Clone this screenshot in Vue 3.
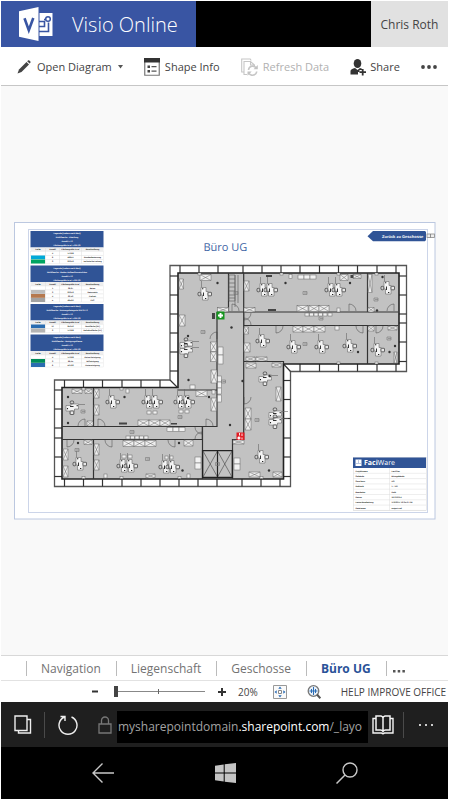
<script setup>
import { ref } from 'vue'

const zoom = ref(20)

const tabs = ['Navigation', 'Liegenschaft', 'Geschosse', 'Büro UG']
const activeTab = ref('Büro UG')

const headings = ['Farbe', 'Anzahl', 'Flächengröße in m²', 'Beschreibung']
const legends = [
  {
    y: 231, title: 'Multiflaeche - Abteilung',
    rows: [
      ['', '4', '170,88', ''],
      ['#00a9d8', '8', '588,51', 'Kundenbetreuung'],
      ['#00a562', '3', '202,53', 'Technische Leitung'],
    ],
  },
  {
    y: 265.5, title: 'Multiflaeche - Boden-Aufbau/Konstruktion',
    rows: [
      ['', '1', '38,67', 'Beton'],
      ['#bdbdbd', '3', '202,53', 'Naturstein'],
      ['#b5794f', '4', '92,53', 'Parkett'],
      ['#a2a2a2', '5', '485,60', 'PVC'],
    ],
  },
  {
    y: 304, title: 'Multiflaeche - Nutzungskategorie DIN 277-2',
    rows: [
      ['#2a6cb0', '10', '650,52', 'Nutzfläche (NF)'],
      ['#b4b4b4', '3', '170,88', 'Verkehrsfläche (VF)'],
    ],
  },
  {
    y: 334.5, title: 'Multiflaeche - Reinigungsklasse',
    rows: [
      ['', '4', '170,88', 'Keine Reinigung'],
      ['#008c58', '3', '88,45', 'Vollreinigung'],
      ['#2a6cb0', '6', '501,62', 'Unterreinigung'],
    ],
  },
]
const cols = [38, 52.5, 70.5, 92.5]

const info = [
  ['Projektname', 'FaciPlan'],
  ['Gebäude', 'Bürogebäude'],
  ['Geschoss', 'UG'],
  ['Maßstab', '1 : 100'],
  ['Bearbeiter', 'Roth'],
  ['Datum', '18.03.2014'],
  ['Letzte Bearbeitung', '1/12/2017 12:35:07 PM'],
  ['Dateiname', 'output.vsd'],
]

/* Grid ticks between the outer frame and the facade: [fixed edges, positions] */
const ticksX = [
  [265.5, 273, [180, 199, 218, 243, 262, 281, 300, 319.5, 338.5, 357.5, 377, 396]],
  [364, 371.5, [300, 319.5, 338.5, 357.5, 377, 396]],
  [380, 387.5, [64.5, 83.5, 102.5, 122, 141, 160]],
  [479, 486.5, [64.5, 83.5, 102.5, 122, 141, 160, 179, 198, 217, 242, 261, 280]],
]
const ticksY = [
  [399, 406.5, [276, 295, 314, 323, 342, 361.5]],
  [170, 178, [276, 295, 314, 333, 352, 371]],
  [54.5, 62, [390, 409, 428, 438, 457, 476.5]],
  [283.5, 290.5, [380.5, 399.5, 418.5, 438, 457, 476.5]],
]

const walls =
  'M228.5 273V312M217 312H398M243.7 325.5H398M217 312V427M243.7 273V437M367.5 273V312M367.5 325.5V364' +
  'M243.7 361.5H283.5V364M178 390H217M62 426.5H217M62 439.5H202.5V426.5M202.5 439.5V479' +
  'M93.5 388V426.5M93.5 439.5V479M232.5 479V439.5H243.7V432'

/* x, y, width, height of cupboards drawn with a cross */
const cabinets = [
  [200, 274.5, 11, 6], [179, 315, 6, 11], [179, 279, 4.5, 10], [217.5, 307.5, 11, 4.5],
  [210.5, 342, 6, 9.5], [210.5, 352, 6, 9.5], [211, 370, 6, 13], [211, 398, 5.5, 13],
  [244, 281, 5, 10], [244, 307.5, 11, 4.5], [297, 305.5, 11, 6], [309, 305.5, 10, 6], [319, 305.5, 10, 6],
  [244, 343, 6, 9], [244, 327, 4.5, 7], [293, 326, 10, 6], [303, 326, 11, 6], [314, 326, 11, 6],
  [246, 357, 9, 4], [256, 357, 11, 4], [246, 363, 10, 5], [272, 363, 9, 4],
  [340, 274.5, 8, 6], [353, 274.5, 8, 4], [368, 274.5, 4, 18], [368, 307.5, 6, 4.5],
  [368, 326, 6, 5], [388, 326, 9, 4], [394, 352, 3, 11],
  [72, 389, 10, 4.5], [85, 389, 7, 4.5], [94, 389, 5, 9], [94, 405, 5, 10], [87, 421, 6, 5],
  [138, 420, 11, 6], [149, 420, 11, 6], [160, 420, 10, 6], [196, 390.5, 11, 6],
  [123, 440.5, 11, 6], [134, 440.5, 11, 6], [145, 440.5, 11, 6], [84, 440, 8, 4.5],
  [94, 444, 5, 11], [94, 460, 5, 10], [63, 449, 5, 11], [63, 466, 5, 11], [184, 440, 9, 6],
  [245, 408, 6, 11], [245, 419, 6, 11], [233, 440, 11, 4], [276, 387, 5, 14],
  [249, 472, 11, 5], [273, 472, 9, 5], [146, 474, 9, 4],
]

/* Plain white boxes: chairs, stools and sideboards */
const boxes = [
  [298, 275, 6, 4], [304, 275, 6, 4], [310, 275, 6, 4], [289, 274.5, 3, 4],
  [305, 313, 4, 3], [309.5, 313, 4, 3], [314, 313, 4, 3], [318.5, 313, 4, 3], [323, 313, 4, 3], [328, 313, 4, 3],
  [218, 347, 5, 8], [218, 355, 5, 9], [217.5, 376, 4, 6], [217.5, 382, 4, 6], [217.5, 388, 4, 6], [217.5, 395, 4, 7],
  [167, 427.5, 6, 4], [173, 427.5, 6, 4], [179, 427.5, 6, 4],
  [126, 436, 4, 3], [130.5, 436, 4, 3], [135, 436, 4, 3], [139.5, 436, 4, 3], [144, 436, 4, 3],
  [195, 457, 6, 6], [195, 463, 6, 6], [234, 458, 6, 6], [234, 464, 6, 6],
  [126, 389, 3, 4], [337, 308, 3, 4], [335, 326, 4, 4], [190, 385, 5, 4], [212, 390, 3, 4],
  [104, 474, 3, 4], [187, 474, 3, 4],
  [70, 411, 4, 3], [147, 411, 4, 3], [153, 411, 4, 3], [179, 410, 4, 3], [185, 410, 4, 3],
  [122, 455, 4, 3], [128, 455, 4, 3], [165, 456, 3, 3], [170, 456, 3, 3],
  [198, 273, 3, 2], [280, 273, 3, 2], [337, 273, 3, 2], [375, 273, 3, 2], [337, 362, 3, 2], [375, 362, 3, 2],
  [82, 388, 3, 2], [120, 388, 3, 2], [82, 476.5, 3, 2], [120, 476.5, 3, 2], [178, 476.5, 3, 2], [260, 476.5, 3, 2],
]

/* Upright workplaces (x, y of the centre); the second list is laid on its side */
const desks = [
  [204, 294], [263, 290], [270, 290], [331, 290], [338, 290], [387, 288], [262, 341], [293, 347],
  [321, 347], [349, 346], [377, 350], [112, 402], [148, 402], [155, 402], [180, 402], [187, 402],
  [79, 464], [123, 466], [130, 466], [165, 467], [172, 467], [261, 457],
]
const sideDesks = [[186, 344], [186, 350], [72, 407], [265, 378], [275, 414], [275, 421]]

/* Door leaves: hinge x, hinge y, horizontal and vertical direction */
const doors = [
  [217, 339, -1, -1], [232, 311, 1, -1], [349, 311, 1, -1], [394, 311, -1, -1],
  [276, 326, 1, 1], [363, 326, -1, 1], [376, 326, 1, 1], [244, 313, 1, 1], [244, 325, 1, -1],
  [85, 426, -1, -1], [98, 426, 1, -1], [206, 426, 1, -1], [67, 440, 1, 1], [112, 440, -1, 1],
  [175, 440, -1, 1], [244, 397, 1, 1], [202, 427, -1, 1], [202, 439, -1, -1],
]
const doorPath = ([x, y, h, v]) =>
  `M${x} ${y}v${7 * v}a7 7 0 0 ${h * v > 0 ? 0 : 1} ${7 * h} ${-7 * v}`

const dots = [
  [217.5, 283], [285.5, 283], [188, 336], [350, 283], [382.5, 277], [358, 352], [389.5, 352], [395, 346],
  [231.5, 327.5], [242.5, 381], [230, 425], [68, 397], [124.5, 397], [68, 423], [78, 443], [179, 443],
  [188, 398], [209, 397], [182.5, 470.5], [269, 470.5], [188.5, 380], [269.5, 376], [377, 310.5],
]
const labels = [
  [203, 332], [305, 293], [305, 344], [376, 299.5], [389, 338.5], [83, 411.5], [77, 450], [147.5, 459],
  [132, 432], [180, 417], [257, 420], [217.5, 464], [236, 293], [223.5, 381.5], [321, 318.5],
]
</script>

<template>
  <div class="screen">
    <header class="brandbar">
      <a class="brand" href="#">
        <svg class="logo" viewBox="0 0 35 34" aria-hidden="true">
          <path d="M0 4.200 19.500 0v34L0 29.800z" fill="#fff" />
          <path d="M20.500 6h13v23h-13z" fill="#fff" />
          <path d="M20 14.500h5.500v5H20M20 24.500h9.500v-9M25 12.500h2" fill="none" stroke="#3955a3" stroke-width="1.600" />
          <circle cx="29" cy="12" r="2.300" fill="#fff" stroke="#3955a3" stroke-width="1.500" />
          <path d="m5.500 11.300 4.300 12L14.300 11" fill="none" stroke="#3955a3" stroke-width="2.600" />
        </svg>
        <span class="product">Visio Online</span>
      </a>
      <div class="blank"></div>
      <button class="user">Chris Roth</button>
    </header>

    <div class="toolbar">
      <button class="tool open">
        <svg width="14" height="14" viewBox="0 0 14 14" aria-hidden="true">
          <path d="M.5 13.500 2 9.500 9.500 2 12 4.500 4.500 12z" fill="#444" />
          <path d="M10.200 1.300 11.300.3c.8-.6 2.700 1.200 2.200 2.100l-.9 1.200z" fill="#444" />
        </svg>
        <span>Open Diagram</span>
        <svg width="5" height="4" viewBox="0 0 5 4" aria-hidden="true"><path d="M0 0h5L2.500 3.500z" fill="#555" /></svg>
      </button>
      <button class="tool">
        <svg width="16" height="18" viewBox="0 0 16 18" aria-hidden="true">
          <path d="M.75.75h14.500v16.500H.75z" fill="#fff" stroke="#777" stroke-width="1.200" />
          <path d="M0 0h16v4.500H0z" fill="#333" />
          <path d="M3.500 7.500H6V10H3.500zM3.500 12H6v2.500H3.500z" fill="#444" />
          <path d="M7.500 8.700h5M7.500 13.200h5" stroke="#555" stroke-width="1.200" />
        </svg>
        <span>Shape Info</span>
      </button>
      <button class="tool refresh" disabled>
        <svg width="17" height="18" viewBox="0 0 17 18" aria-hidden="true">
          <g fill="none" stroke="#c6c6c6" stroke-width="1.100">
            <path d="M2.500 14H.7V1h8.500l1 1.500M6 16.500H3V3.500h6.500l4 3.500v1M9.500 3.500V7h4" />
            <path d="M7.500 12a4.300 4.300 0 0 1 7.800-2M15.700 13.500a4.300 4.300 0 0 1-7.700 2" stroke-width="1.600" />
          </g>
          <path d="M16.800 7v4.300h-4.300zM6.500 17.800v-4.200h4.200z" fill="#c2c2c2" />
        </svg>
        <span>Refresh Data</span>
      </button>
      <button class="tool share">
        <svg width="17" height="17" viewBox="0 0 17 17" aria-hidden="true">
          <ellipse cx="7.500" cy="4.500" rx="3.800" ry="4.500" fill="#333" />
          <path d="M.5 15.500V12c0-1.500 2-2.500 4.500-3l2.500 2L10 9l2 .8v1.200H9.500v2H8v2.500z" fill="#333" />
          <path d="M12.700 10v6.500M9.500 13.200H16" stroke="#333" stroke-width="1.800" />
        </svg>
        <span>Share</span>
      </button>
      <button class="tool more" aria-label="More commands">
        <svg width="16" height="4" viewBox="0 0 16 4" aria-hidden="true">
          <circle cx="2" cy="2" r="1.900" /><circle cx="8" cy="2" r="1.900" /><circle cx="14" cy="2" r="1.900" />
        </svg>
      </button>
    </div>

    <main class="canvas">
      <svg class="drawing" viewBox="14 221 422 299" role="img" aria-label="Büro UG">
        <rect x="14.500" y="222.500" width="420.500" height="296.500" fill="#fff" stroke="#bcc8e0" />
        <rect x="28.500" y="229.500" width="399" height="283" fill="none" stroke="#ccd5e9" />
        <text class="title" x="203.500" y="251">Büro UG</text>

        <rect x="427" y="234" width="7.500" height="3.500" fill="#eee" stroke="#888" stroke-width=".8" />
        <path d="M430.500 234v3.500" stroke="#777" stroke-width=".8" />
        <path d="M367.500 236.200 373 231h52l1 1v8l-1 1.300h-52z" fill="#305496" />
        <text x="382" y="237.800" class="back">Zurück zu Geschosse</text>

        <g v-for="l in legends" :key="l.title" class="tiny">
          <rect x="30.500" :y="l.y" width="73" height="16.500" fill="#305496" />
          <g class="light">
            <text x="67" :y="l.y + 3.200">Legende (Farben nach Wert)</text>
            <text x="67" :y="l.y + 7.200">{{ l.title }}</text>
            <text x="67" :y="l.y + 11.200">Anzahl = 13</text>
            <text x="67" :y="l.y + 15.200">Flächengröße in m² = 887,93</text>
          </g>
          <rect x="30.500" :y="l.y + 16.500" width="73" height="4" fill="#eee" />
          <text v-for="(h, i) in headings" :key="h" :x="cols[i]" :y="l.y + 19.200">{{ h }}</text>
          <g v-for="(r, n) in l.rows" :key="n">
            <rect x="30.500" :y="l.y + 20.500 + n * 4" width="73" height="4" fill="#fff" stroke="#e2e2e2" stroke-width=".4" />
            <rect v-if="r[0]" x="31" :y="l.y + 20.500 + n * 4" width="14" height="4" :fill="r[0]" />
            <text v-for="i in 3" :key="i" :x="cols[i]" :y="l.y + 23.200 + n * 4">{{ r[i] }}</text>
          </g>
          <path :d="`M45.500 ${l.y + 16.5}v${4 + l.rows.length * 4}m14 0v-${4 + l.rows.length * 4}m22 0v${4 + l.rows.length * 4}`" stroke="#ddd" stroke-width=".5" fill="none" />
        </g>

        <path d="M170 265.500H406.500V371.500H290.500V486.500H54.500V380H170z" fill="#fff" stroke="#555" stroke-width="1.300" />
        <g stroke="#333" stroke-width="1.200">
          <template v-for="(t, i) in ticksX" :key="'x' + i">
            <path v-for="x in t[2]" :key="x" :d="`M${x} ${t[0]}V${t[1]}`" />
          </template>
          <template v-for="(t, i) in ticksY" :key="'y' + i">
            <path v-for="y in t[2]" :key="y" :d="`M${t[0]} ${y}H${t[1]}`" />
          </template>
          <path d="M170 380l8 8M283.500 364l7 7.500" />
        </g>
        <path d="M178 273H399V364H283.500V479H62V387.500H178z" fill="#c2c2c2" stroke="#222" stroke-width="1.600" />
        <path :d="walls" fill="none" stroke="#333" stroke-width="1.200" />

        <path d="M229 275v26h6V275zM229 279h6M229 283h6M229 287h6M229 291h6M229 295h6M229 298h6M235 275v32M238 275v28" fill="none" stroke="#666" stroke-width=".7" />
        <path d="M203 451h29v26h-29zM217.500 451v26M203 451l14.500 26M217.500 451l-14.500 26M217.500 451l14.500 26M232 451l-14.500 26" fill="none" stroke="#555" stroke-width=".7" />
        <path d="M202.500 450.500h30v27h-30zM217.500 450.500v27" fill="none" stroke="#222" stroke-width="1.200" />

        <g stroke="#666" stroke-width=".5">
          <g v-for="(c, i) in cabinets" :key="i">
            <rect :x="c[0]" :y="c[1]" :width="c[2]" :height="c[3]" fill="#eee" />
            <path :d="`M${c[0]} ${c[1]}l${c[2]} ${c[3]}m0 -${c[3]}l-${c[2]} ${c[3]}`" />
          </g>
          <rect v-for="(b, i) in boxes" :key="'b' + i" :x="b[0]" :y="b[1]" :width="b[2]" :height="b[3]" fill="#f2f2f2" />
          <path v-for="(d, i) in doors" :key="'d' + i" :d="doorPath(d)" fill="none" stroke="#444" />
        </g>

        <defs>
          <g id="desk">
            <path d="M-3-6.500h5v4h2V6H-1.500V1H-3z" fill="#f4f4f4" stroke="#555" stroke-width=".5" />
            <rect x="-6" y="-1.700" width="2.700" height="3.500" rx="1" fill="#ccc" stroke="#333" stroke-width=".7" />
            <rect x="4" y="-1.700" width="3.500" height="3.500" rx=".5" fill="#e8e8e8" stroke="#333" stroke-width=".7" />
            <path d="M-.5-1.500V2" stroke="#333" />
            <path d="M-2-5.200h1.300M1 4.500h1.300" stroke="#222" stroke-width="1.100" />
            <path d="M-2.500-13v6" stroke="#666" stroke-width=".6" />
          </g>
        </defs>
        <use v-for="(d, i) in desks" :key="'k' + i" href="#desk" :x="d[0]" :y="d[1]" />
        <g v-for="(d, i) in sideDesks" :key="'s' + i" :transform="`translate(${d[0]} ${d[1]}) rotate(90)`"><use href="#desk" /></g>

        <circle v-for="(d, i) in dots" :key="'o' + i" :cx="d[0]" :cy="d[1]" r="1.200" fill="#333" />
        <g fill="none" stroke="#777" stroke-width=".6">
          <path v-for="(l, i) in labels" :key="'l' + i" :d="`M${l[0] - 2} ${l[1] - 1.5}h4v3h-4zm1 1.500h3`" />
        </g>
        <path d="M266 275h6v2h-6zM268 309h8v2h-8zM119 422.500h8v2h-8zM350.500 275h3v3h-3zM171 423h6v1.500h-6zM212 313h3v6h-3z" fill="#444" />

        <rect x="216.500" y="311.500" width="8" height="8" fill="#179520" />
        <path d="M220.500 313v5M218 315.500h5" stroke="#fff" stroke-width="1.900" />
        <rect x="236.500" y="432.500" width="8" height="7.500" fill="#e31b23" />
        <path d="M239.500 433v2.500M238 437h1.800v2H238zM242 433.500v2.500M242 437.500v2" stroke="#fff" stroke-width=".9" fill="#fff" />

        <rect x="353.500" y="457.500" width="73" height="53" fill="#fff" stroke="#ddd" stroke-width=".6" />
        <rect x="353" y="457.500" width="73" height="10.500" fill="#305496" />
        <rect x="355.500" y="459.500" width="6" height="6.500" fill="#fff" />
        <path d="M358.500 459.500v4h3M355.500 463.500h3" fill="none" stroke="#9fb2d6" stroke-width=".7" />
        <text class="faci" x="364" y="465"><tspan class="strong">Faci</tspan>Ware</text>
        <g v-for="(r, i) in info" :key="r[0]" class="tiny start">
          <path :d="`M353 ${473.3 + i * 5.3}h73`" stroke="#ddd" stroke-width=".5" />
          <text x="355.500" :y="471.500 + i * 5.3">{{ r[0] }}</text>
          <text x="391.500" :y="471.500 + i * 5.3">{{ r[1] }}</text>
        </g>
        <path d="M389.500 468v42.500" stroke="#ddd" stroke-width=".5" />
      </svg>
    </main>

    <nav class="tabs" aria-label="Pages">
      <button v-for="t in tabs" :key="t" class="tab" :class="{ active: t === activeTab }" @click="activeTab = t">{{ t }}</button>
      <button class="tab overflow" aria-label="More pages">
        <svg width="12" height="4" viewBox="0 0 12 4" aria-hidden="true">
          <path d="M0 1h2.500v2.500H0zM4.700 1h2.500v2.500H4.700zM9.400 1h2.500v2.500H9.400z" fill="#555" />
        </svg>
      </button>
    </nav>

    <div class="status">
      <button class="step" aria-label="Zoom out"><svg width="8" height="8" viewBox="0 0 8 8"><path d="M1 3.500h6" stroke="#333" stroke-width="2" /></svg></button>
      <input class="slider" type="range" min="20" max="400" v-model.number="zoom" aria-label="Zoom" />
      <button class="step" aria-label="Zoom in"><svg width="8" height="8" viewBox="0 0 8 8"><path d="M0 4h8M4 0v8" stroke="#333" stroke-width="2" /></svg></button>
      <output class="percent">{{ zoom }}%</output>
      <button class="fit" aria-label="Fit page">
        <svg width="14" height="14" viewBox="0 0 14 14">
          <path d="M.5.5h13v13H.5z" fill="#fafafa" stroke="#999" />
          <path d="M5.500 5.500h3v3h-3z" fill="#fff" stroke="#888" />
          <path d="M7 1.500 8.700 3.700H5.300zM7 12.500l1.700-2.200H5.300zM1.500 7l2.200-1.700v3.400zM12.500 7l-2.200-1.700v3.400z" fill="#2b6cb5" />
        </svg>
      </button>
      <button class="fit" aria-label="Zoom to page width">
        <svg width="14" height="14" viewBox="0 0 14 14">
          <circle cx="6.500" cy="6" r="5.300" fill="#e8f0f8" stroke="#777" stroke-width="1.300" />
          <path d="m10 9.500 3.300 3.800" stroke="#555" stroke-width="2" />
          <path d="M6.500 2v8M2.500 6h8M4.500 4v4M8.500 4v4" stroke="#2b6cb5" />
        </svg>
      </button>
      <a class="help" href="#">HELP IMPROVE OFFICE</a>
    </div>

    <div class="browser">
      <button class="chrome pages" aria-label="Tabs">
        <svg width="18" height="19" viewBox="0 0 18 19"><path d="M1 1h12v14.500H1z M13 4.500h3.500V18H4.500v-2.500" fill="none" stroke="#eee" stroke-width="1.400" /></svg>
      </button>
      <button class="chrome reload" aria-label="Reload">
        <svg width="20" height="20" viewBox="0 0 20 20"><path d="M13.500 2a9 9 0 1 1-7 0M2.500 1.500h4.500V6" fill="none" stroke="#eee" stroke-width="1.400" /></svg>
      </button>
      <svg class="lock" width="14" height="18" viewBox="0 0 14 18" aria-hidden="true"><path d="M1 8h12v9H1zM3.500 8V4.500a3.500 3.500 0 0 1 7 0V8" fill="none" stroke="#777" stroke-width="1.300" /></svg>
      <button class="address">mysharepointdomain<b>.sharepoint.com</b>/_layo</button>
      <button class="chrome reader" aria-label="Reading view">
        <svg width="22" height="20" viewBox="0 0 22 20">
          <path d="M4 1h5q2 .5 2 2 0-1.500 2-2h5v14h-4.500q-2 0-2.500 1.500-.5-1.500-2.500-1.500H4zM11 3v13" fill="none" stroke="#f4f4f4" stroke-width="1.500" />
          <path d="M4 3.500H1V18h8.500q1.500 1.500 3 0H21V3.500h-3" fill="none" stroke="#f4f4f4" stroke-width="1.400" />
        </svg>
      </button>
      <button class="chrome dots" aria-label="More">
        <svg width="14" height="2" viewBox="0 0 14 2"><path d="M0 0h2v2H0zM6 0h2v2H6zM12 0h2v2h-2z" fill="#ccc" /></svg>
      </button>
    </div>

    <nav class="system" aria-label="System">
      <button aria-label="Back"><svg width="22" height="20" viewBox="0 0 22 20"><path d="M10.500.5 1 10l9.500 9.500M1 10h21" fill="none" stroke="#c8c8c8" stroke-width="1.400" /></svg></button>
      <button aria-label="Start"><svg width="21" height="20" viewBox="0 0 21 20"><path d="M0 2.800 8.700 1.500v8H0zM9.700 1.300 21 0v9.500H9.700zM0 10.500h8.700v8L0 17.200zM9.700 10.500H21V20L9.700 18.700z" fill="#c4c4c4" /></svg></button>
      <button aria-label="Search"><svg width="22" height="22" viewBox="0 0 22 22"><circle cx="14" cy="8" r="7" fill="none" stroke="#c8c8c8" stroke-width="1.400" /><path d="M9 13 .5 21.500" stroke="#c8c8c8" stroke-width="1.500" /></svg></button>
    </nav>
  </div>
</template>

<style>
body {
  background: #fff;
}
</style>

<style scoped>
.screen {
  box-sizing: border-box;
  min-height: 100vh;
  display: flex;
  flex-direction: column;
  padding: 1px 2px 1px 1px;
  background: #fff;
  color: #444;
  font-family: "Open Sans", "Noto Sans", sans-serif;
  font-size: 12px;
  line-height: 16px;
}
button {
  border: 0;
  padding: 0;
  margin: 0;
  background: none;
  color: inherit;
  font: inherit;
  white-space: nowrap;
}
svg {
  display: block;
  flex: none;
}
a {
  text-decoration: none;
}
.brandbar {
  display: flex;
  height: 46px;
}
.brand {
  box-sizing: border-box;
  width: 195px;
  display: flex;
  align-items: center;
  gap: 18px;
  padding-left: 18px;
  background: #3955a3;
  color: #fff;
  white-space: nowrap;
}
.product {
  padding-top: 2px;
  font-size: 20px;
  font-weight: 300;
  line-height: 28px;
}
.logo {
  width: 35px;
  height: 34px;
}
.blank {
  flex: 1;
  background: #000;
}
.user {
  width: 77px;
  padding-top: 2px;
  background: #e1e1e1;
}
.toolbar {
  box-sizing: border-box;
  display: flex;
  align-items: center;
  justify-content: space-between;
  height: 39px;
  padding: 2px 11px 0 16px;
  border-bottom: 1px solid #c6c6c6;
  font-size: 11px;
}
.tool {
  display: flex;
  align-items: center;
  gap: 5px;
}
.open {
  gap: 6px;
}
.share {
  gap: 3px;
}
.refresh {
  color: #b1b1b1;
}
.more {
  fill: #444;
}
.canvas {
  flex: 1;
  display: flex;
  align-items: center;
  padding: 0 12px 0 13px;
  background: #f9f9f9;
}
.drawing {
  flex: 1;
  min-width: 0;
  text-rendering: geometricPrecision;
}
.title {
  font-size: 11px;
  fill: #3f66a5;
}
.back {
  font-family: "Liberation Sans", sans-serif;
  font-size: 4px;
  font-weight: 700;
  fill: #fff;
}
.tiny {
  font-family: "Liberation Sans", sans-serif;
  font-size: 2px;
  font-weight: 700;
  text-anchor: middle;
  fill: #222;
}
.light {
  fill: #fff;
}
.start {
  text-anchor: start;
}
.faci {
  font-size: 7px;
  fill: #fff;
}
.strong {
  font-weight: 700;
}
.tabs {
  display: flex;
  align-items: center;
  height: 24px;
  padding-left: 25px;
  border-top: 1px solid #d8d8d8;
  border-bottom: 1px solid #e2e2e2;
  color: #737373;
}
.tab {
  height: 15px;
  padding: 0 15px 0 14px;
  border-left: 1px solid #bbb;
  line-height: 15px;
}
.tab.active {
  color: #2a5298;
  font-weight: 700;
}
.tab.overflow {
  padding: 6px 6px 0;
}
.status {
  display: flex;
  align-items: center;
  height: 21px;
  padding: 0 6px 0 90px;
}
.step {
  width: 8px;
}
.slider {
  appearance: none;
  width: 91px;
  height: 12px;
  margin: 0 13px 0 15px;
  background:
    linear-gradient(#666, #666) 44px center / 1px 5px no-repeat,
    linear-gradient(#888, #888) center / 100% 1px no-repeat;
}
.slider::-webkit-slider-thumb {
  appearance: none;
  width: 4px;
  height: 11px;
  background: #444;
}
.percent {
  margin: 0 15px 0 12px;
  font-size: 10px;
}
.fit {
  margin-right: 20px;
}
.help {
  margin-left: auto;
  color: #444;
  font-size: 10px;
  white-space: nowrap;
}
.browser {
  display: flex;
  align-items: center;
  height: 45px;
  background: #1f1f1f;
}
.chrome {
  display: flex;
  align-items: center;
  justify-content: center;
  height: 26px;
}
.pages {
  width: 44px;
  border-right: 1px solid #4a4a4a;
}
.reload {
  width: 46px;
}
.lock {
  margin: 0 5px 0 7px;
}
.address {
  flex: 1;
  min-width: 0;
  height: 32px;
  margin-top: 4px;
  overflow: hidden;
  padding-left: 1px;
  background: #000;
  color: #a3a3a3;
  font-size: 12px;
  text-align: left;
}
.address b {
  color: #fff;
  font-weight: 400;
}
.reader {
  width: 36px;
  padding-right: 6px;
  border-right: 1px solid #4a4a4a;
}
.dots {
  width: 44px;
}
.system {
  display: flex;
  align-items: center;
  justify-content: space-between;
  height: 52px;
  padding: 0 90px 0 91px;
  background: #000;
}
</style>
